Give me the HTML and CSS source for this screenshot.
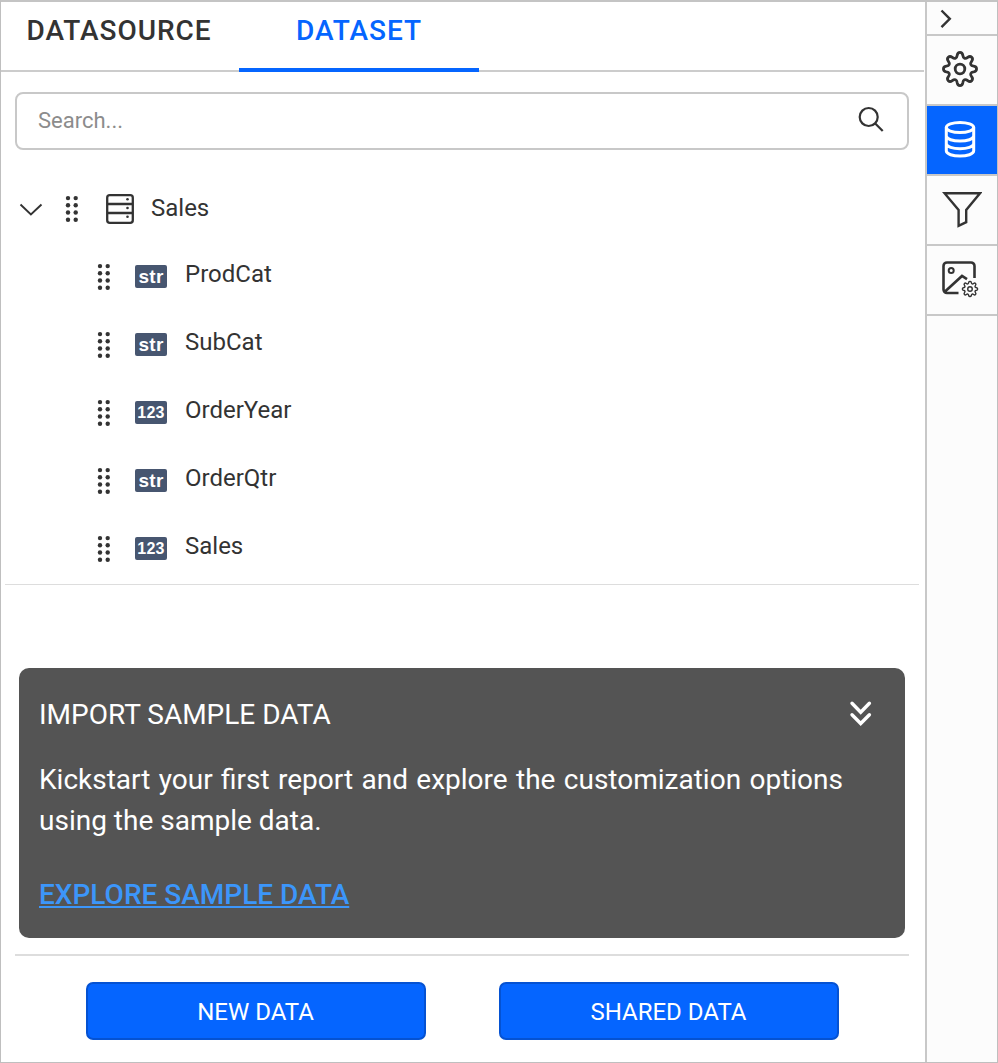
FILE: index.html
```html
<!DOCTYPE html>
<html lang="en">
<head>
<meta charset="utf-8">
<title>Dataset</title>
<link rel="stylesheet" href="styles.css">
</head>
<body>
<svg class="defs" width="0" height="0" aria-hidden="true">
  <symbol id="grip" viewBox="0 0 14 28">
    <g fill="#333"><circle cx="3" cy="3.1" r="2.2"/><circle cx="10.7" cy="3.1" r="2.2"/><circle cx="3" cy="10.3" r="2.2"/><circle cx="10.7" cy="10.3" r="2.2"/><circle cx="3" cy="17.5" r="2.2"/><circle cx="10.7" cy="17.5" r="2.2"/><circle cx="3" cy="24.7" r="2.2"/><circle cx="10.7" cy="24.7" r="2.2"/></g>
  </symbol>
  <symbol id="gear" viewBox="0 0 36 36">
    <path d="M15.2 4.3C15.8 .5 20.2.5 20.8 4.3C21.2 7.4 23.2 8.3 25.7 6.4C28.8 4 32 7.2 29.6 10.3C27.7 12.8 28.6 14.8 31.7 15.2C35.5 15.8 35.5 20.2 31.7 20.8C28.6 21.2 27.7 23.2 29.6 25.7C32 28.8 28.8 32 25.7 29.6C23.2 27.7 21.2 28.6 20.8 31.7C20.2 35.5 15.8 35.5 15.2 31.7C14.8 28.6 12.8 27.7 10.3 29.6C7.2 32 4 28.8 6.4 25.7C8.3 23.2 7.4 21.2 4.3 20.8C.5 20.2.5 15.8 4.3 15.2C7.4 14.8 8.3 12.8 6.4 10.3C4 7.2 7.2 4 10.3 6.4C12.8 8.3 14.8 7.4 15.2 4.3Z"/>
    <circle cx="18" cy="18" r="4.8"/>
  </symbol>
</svg>
<div class="app">
  <main class="panel">
    <nav class="tabs">
      <div class="tab">DATASOURCE</div>
      <div class="tab tab-active">DATASET</div>
    </nav>
    <div class="search">
      <span>Search...</span>
      <svg width="28" height="28" fill="none" stroke="#333" stroke-width="2.2"><circle cx="11.7" cy="11" r="9"/><path d="M18.200 17.500l7.500 7.500"/></svg>
    </div>
    <section class="tree">
      <div class="root">
        <svg class="chevron" width="24" height="14" fill="none" stroke="#333" stroke-width="1.9"><path d="M1.500 1.500l10.400 10L22.500 1.500"/></svg>
        <svg class="grip" width="14" height="28"><use href="#grip"/></svg>
        <svg class="table" width="28" height="31" fill="none" stroke="#333" stroke-width="2.3"><rect x="1.200" y="1.200" width="25.600" height="27.600" rx="2.600"/><path d="M1 10h26M1 19h26"/><g fill="#333" stroke="none"><circle cx="21.500" cy="5.200" r="1.300"/><circle cx="21.500" cy="14" r="1.300"/><circle cx="21.500" cy="22.700" r="1.300"/></g></svg>
        <span>Sales</span>
      </div>
      <div class="field"><svg class="grip" width="14" height="28"><use href="#grip"/></svg><b class="type">str</b><span>ProdCat</span></div>
      <div class="field"><svg class="grip" width="14" height="28"><use href="#grip"/></svg><b class="type">str</b><span>SubCat</span></div>
      <div class="field"><svg class="grip" width="14" height="28"><use href="#grip"/></svg><b class="type num">123</b><span>OrderYear</span></div>
      <div class="field"><svg class="grip" width="14" height="28"><use href="#grip"/></svg><b class="type">str</b><span>OrderQtr</span></div>
      <div class="field"><svg class="grip" width="14" height="28"><use href="#grip"/></svg><b class="type num">123</b><span>Sales</span></div>
    </section>
    <section class="card">
      <header class="card-head">
        <span>IMPORT SAMPLE DATA</span>
        <svg width="24" height="26" fill="none" stroke="#fff" stroke-width="3.4" stroke-linecap="round"><path d="M3 3.300l8.700 9 8.700-9M3 14.800l8.700 8.700 8.700-8.700"/></svg>
      </header>
      <p class="card-text">Kickstart your first report and explore the customization options using the sample data.</p>
      <a class="card-link">EXPLORE SAMPLE DATA</a>
    </section>
    <footer class="actions">
      <button class="btn">NEW DATA</button>
      <button class="btn">SHARED DATA</button>
    </footer>
  </main>
  <aside class="rail">
    <div class="rail-item collapse"><svg width="12" height="20" fill="none" stroke="#333" stroke-width="2.4"><path d="M1.500 1.500l8.300 8.300-8.300 8.300"/></svg></div>
    <div class="rail-item"><svg width="36" height="36" fill="none" stroke="#333" stroke-width="2.8"><use href="#gear"/></svg></div>
    <div class="rail-item rail-active"><svg width="32" height="38" fill="none" stroke="#fff" stroke-width="3"><ellipse cx="16" cy="7.500" rx="13.700" ry="5"/><path d="M2.300 7.500v23.300c0 7 27.400 7 27.400 0v-23.300M2.300 15.800c0 7 27.400 7 27.400 0M2.300 23.400c0 7 27.400 7 27.400 0"/></svg></div>
    <div class="rail-item"><svg class="funnel" width="40" height="38" fill="none" stroke="#333" stroke-width="2.4"><path d="M2.500 3.200h35.500L24.200 20v12.200l-7.600 3.700V20z"/></svg></div>
    <div class="rail-item"><svg class="image" width="38" height="38" fill="none" stroke="#333" stroke-width="2.6"><path d="M17.500 33H6a3.500 3.500 0 0 1-3.500-3.500V6A3.500 3.500 0 0 1 6 2.500h24a3.500 3.500 0 0 1 3.500 3.500V18M3.500 32L21 16l5 3.200"/><circle cx="10.200" cy="10.500" r="2.500" stroke-width="2"/><svg x="20.500" y="20.500" width="17" height="17" viewBox="0 0 36 36" stroke-width="3"><use href="#gear"/></svg></svg></div>
  </aside>
</div>
</body>
</html>
```
FILE: styles.css
```css
* { box-sizing: border-box; }
body { margin: 0; font-family: Roboto, sans-serif; color: #333; background: #fff; }
svg { display: block; flex: none; }
.defs { position: absolute; }
.app { display: flex; height: 1063px; border: 1px solid #bfbfbf; border-top: 2px solid #c4c4c4; }
.panel { flex: 1; display: flex; flex-direction: column; min-width: 0; }
.tabs { display: flex; height: 70px; margin-right: 1px; border-bottom: 2px solid #ccc; flex: none; }
.tab { width: 238px; height: 70px; padding: 12px 0 0 25.5px; font-size: 28px; line-height: 33px; font-weight: 500; letter-spacing: 0.95px; white-space: nowrap; }
.tab-active { width: 240px; padding: 12px 0 0 57px; color: #0565ff; border-bottom: 4px solid #0565ff; }
.search { display: flex; align-items: center; justify-content: space-between; flex: none; height: 58px; margin: 20px 16px 0 14px; padding: 0 22px 2px 21px; border: 2px solid #c8c8c8; border-radius: 8px; font-size: 22px; color: #8c8c8c; }
.tree { flex: none; height: 435px; margin: 0 6px 0 4px; padding-top: 24px; border-bottom: 1px solid #ddd; font-size: 24px; }
.root { display: flex; height: 68px; padding: 20px 0 0 14px; line-height: 28px; }
.root span { margin-left: 17px; }
.root .chevron { margin-top: 9px; }
.root .grip { margin: 1px 0 0 22px; }
.root .table { margin: 0 0 0 27px; }
.field { display: flex; height: 68px; padding: 18px 0 0 92px; line-height: 28px; }
.field .grip { margin-top: 3px; }
.field span { margin-left: 18px; }
.type { width: 32px; height: 23px; margin: 5px 0 0 24px; border-radius: 2px; background: #475670; color: #fff; font: bold 19px/24px "Liberation Sans", sans-serif; letter-spacing: 0.3px; text-align: center; }
.num { font-size: 16px; line-height: 23px; letter-spacing: 0.3px; }
.card { flex: none; height: 270px; margin: 83px 20px 0 18px; padding: 30px 20px 0; border-radius: 10px; background: #545454; color: #fff; font-size: 28px; }
.card-head { display: flex; justify-content: space-between; padding-right: 12px; line-height: 33px; }
.card-head svg { margin-top: 2px; }
.card-text { width: 804px; margin: 28px 0 0; line-height: 41px; text-align: justify; }
.card-link { display: block; margin-top: 37px; line-height: 33px; font-weight: 500; color: #3c96fa; text-decoration: underline; text-decoration-thickness: 2px; text-underline-offset: 2px; text-decoration-skip-ink: none; }
.actions { display: flex; gap: 73px; margin: 16px 16px 0 14px; padding: 26px 0 0 71px; border-top: 2px solid #ddd; }
.btn { width: 340px; height: 58px; padding: 2px 1px 0 0; border: 2px solid #0552d2; border-radius: 7px; background: #0565ff; color: #fff; font: 24px Roboto, sans-serif; }
.rail { width: 72px; flex: none; border-left: 2px solid #c8c8c8; background: #fcfcfc; }
.rail-item { display: flex; align-items: center; justify-content: center; height: 70px; padding: 0 4px 2px 0; border-bottom: 2px solid #c8c8c8; }
.collapse { height: 34px; justify-content: flex-start; padding: 2px 0 0 13px; }
.rail-active { background: #0565ff; background-clip: padding-box; }
.rail-item .funnel { margin-left: 3px; }
.rail-item .image { margin-left: -1px; }
```
